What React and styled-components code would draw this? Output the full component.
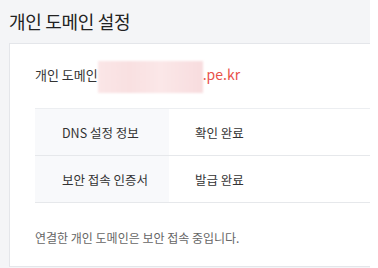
import React from 'react';
import styled, { createGlobalStyle } from 'styled-components';

const GlobalStyle = createGlobalStyle`
  body {
    margin: 0;
    background: #ffffff;
    font-family: "Noto Sans CJK KR", "Noto Sans", sans-serif;
    -webkit-font-smoothing: antialiased;
  }
`;

const Page = styled.div`
  width: 370px;
  height: 268px;
  overflow: hidden;
  background: #f4f5f7;
  padding-left: 9px;
  box-sizing: border-box;
`;

const Title = styled.h1`
  margin: 0;
  padding-top: 9px;
  height: 43px;
  box-sizing: border-box;
  font-size: 18px;
  font-weight: 400;
  line-height: 24px;
  color: #222;
  letter-spacing: -0.3px;
`;

const Card = styled.div`
  width: 400px;
  background: #fff;
  border: 1px solid #e4e6ea;
  padding: 0 0 18px 25px;
  box-sizing: border-box;
`;

const DomainRow = styled.div`
  display: flex;
  align-items: center;
  height: 20px;
  padding: 20px 0 0;
  margin-bottom: 24px;
  font-size: 13px;
  color: #333;
`;

const Label = styled.span`
  margin-right: 0;
`;

const Masked = styled.span`
  display: inline-block;
  width: 105px;
  height: 32px;
  margin-top: 6px;
  background: linear-gradient(90deg, #fbe6e7 0%, #f9e0e1 30%, #fbe7e8 60%, #f8dcde 100%);
  filter: blur(1px);
`;

const DomainTail = styled.span`
  color: #e8524a;
  font-size: 14px;
`;

const Table = styled.div`
  width: 335px;
  border-top: 1px solid #eceef1;
`;

const Row = styled.div`
  display: grid;
  grid-template-columns: 134px 1fr;
  height: 46px;
  border-bottom: 1px solid #e6e8eb;
  font-size: 12.5px;
  color: #333;
`;

const Cell = styled.div`
  display: flex;
  align-items: center;
  padding-left: ${p => (p.$head ? '27px' : '26px')};
  background: ${p => (p.$head ? '#f8f9fb' : '#fff')};
`;

const Note = styled.p`
  margin: 25px 0 0;
  line-height: 20px;
  font-size: 12px;
  color: #666;
`;

const rows = [
  { head: 'DNS 설정 정보', value: '확인 완료' },
  { head: '보안 접속 인증서', value: '발급 완료' },
];

const App = () => (
  <>
    <GlobalStyle />
    <Page>
      <Title>개인 도메인 설정</Title>
      <Card>
        <DomainRow>
          <Label>개인 도메인</Label>
          <Masked />
          <DomainTail>.pe.kr</DomainTail>
        </DomainRow>
        <Table>
          {rows.map(r => (
            <Row key={r.head}>
              <Cell $head>{r.head}</Cell>
              <Cell>{r.value}</Cell>
            </Row>
          ))}
        </Table>
        <Note>연결한 개인 도메인은 보안 접속 중입니다.</Note>
      </Card>
    </Page>
  </>
);

export default App;
